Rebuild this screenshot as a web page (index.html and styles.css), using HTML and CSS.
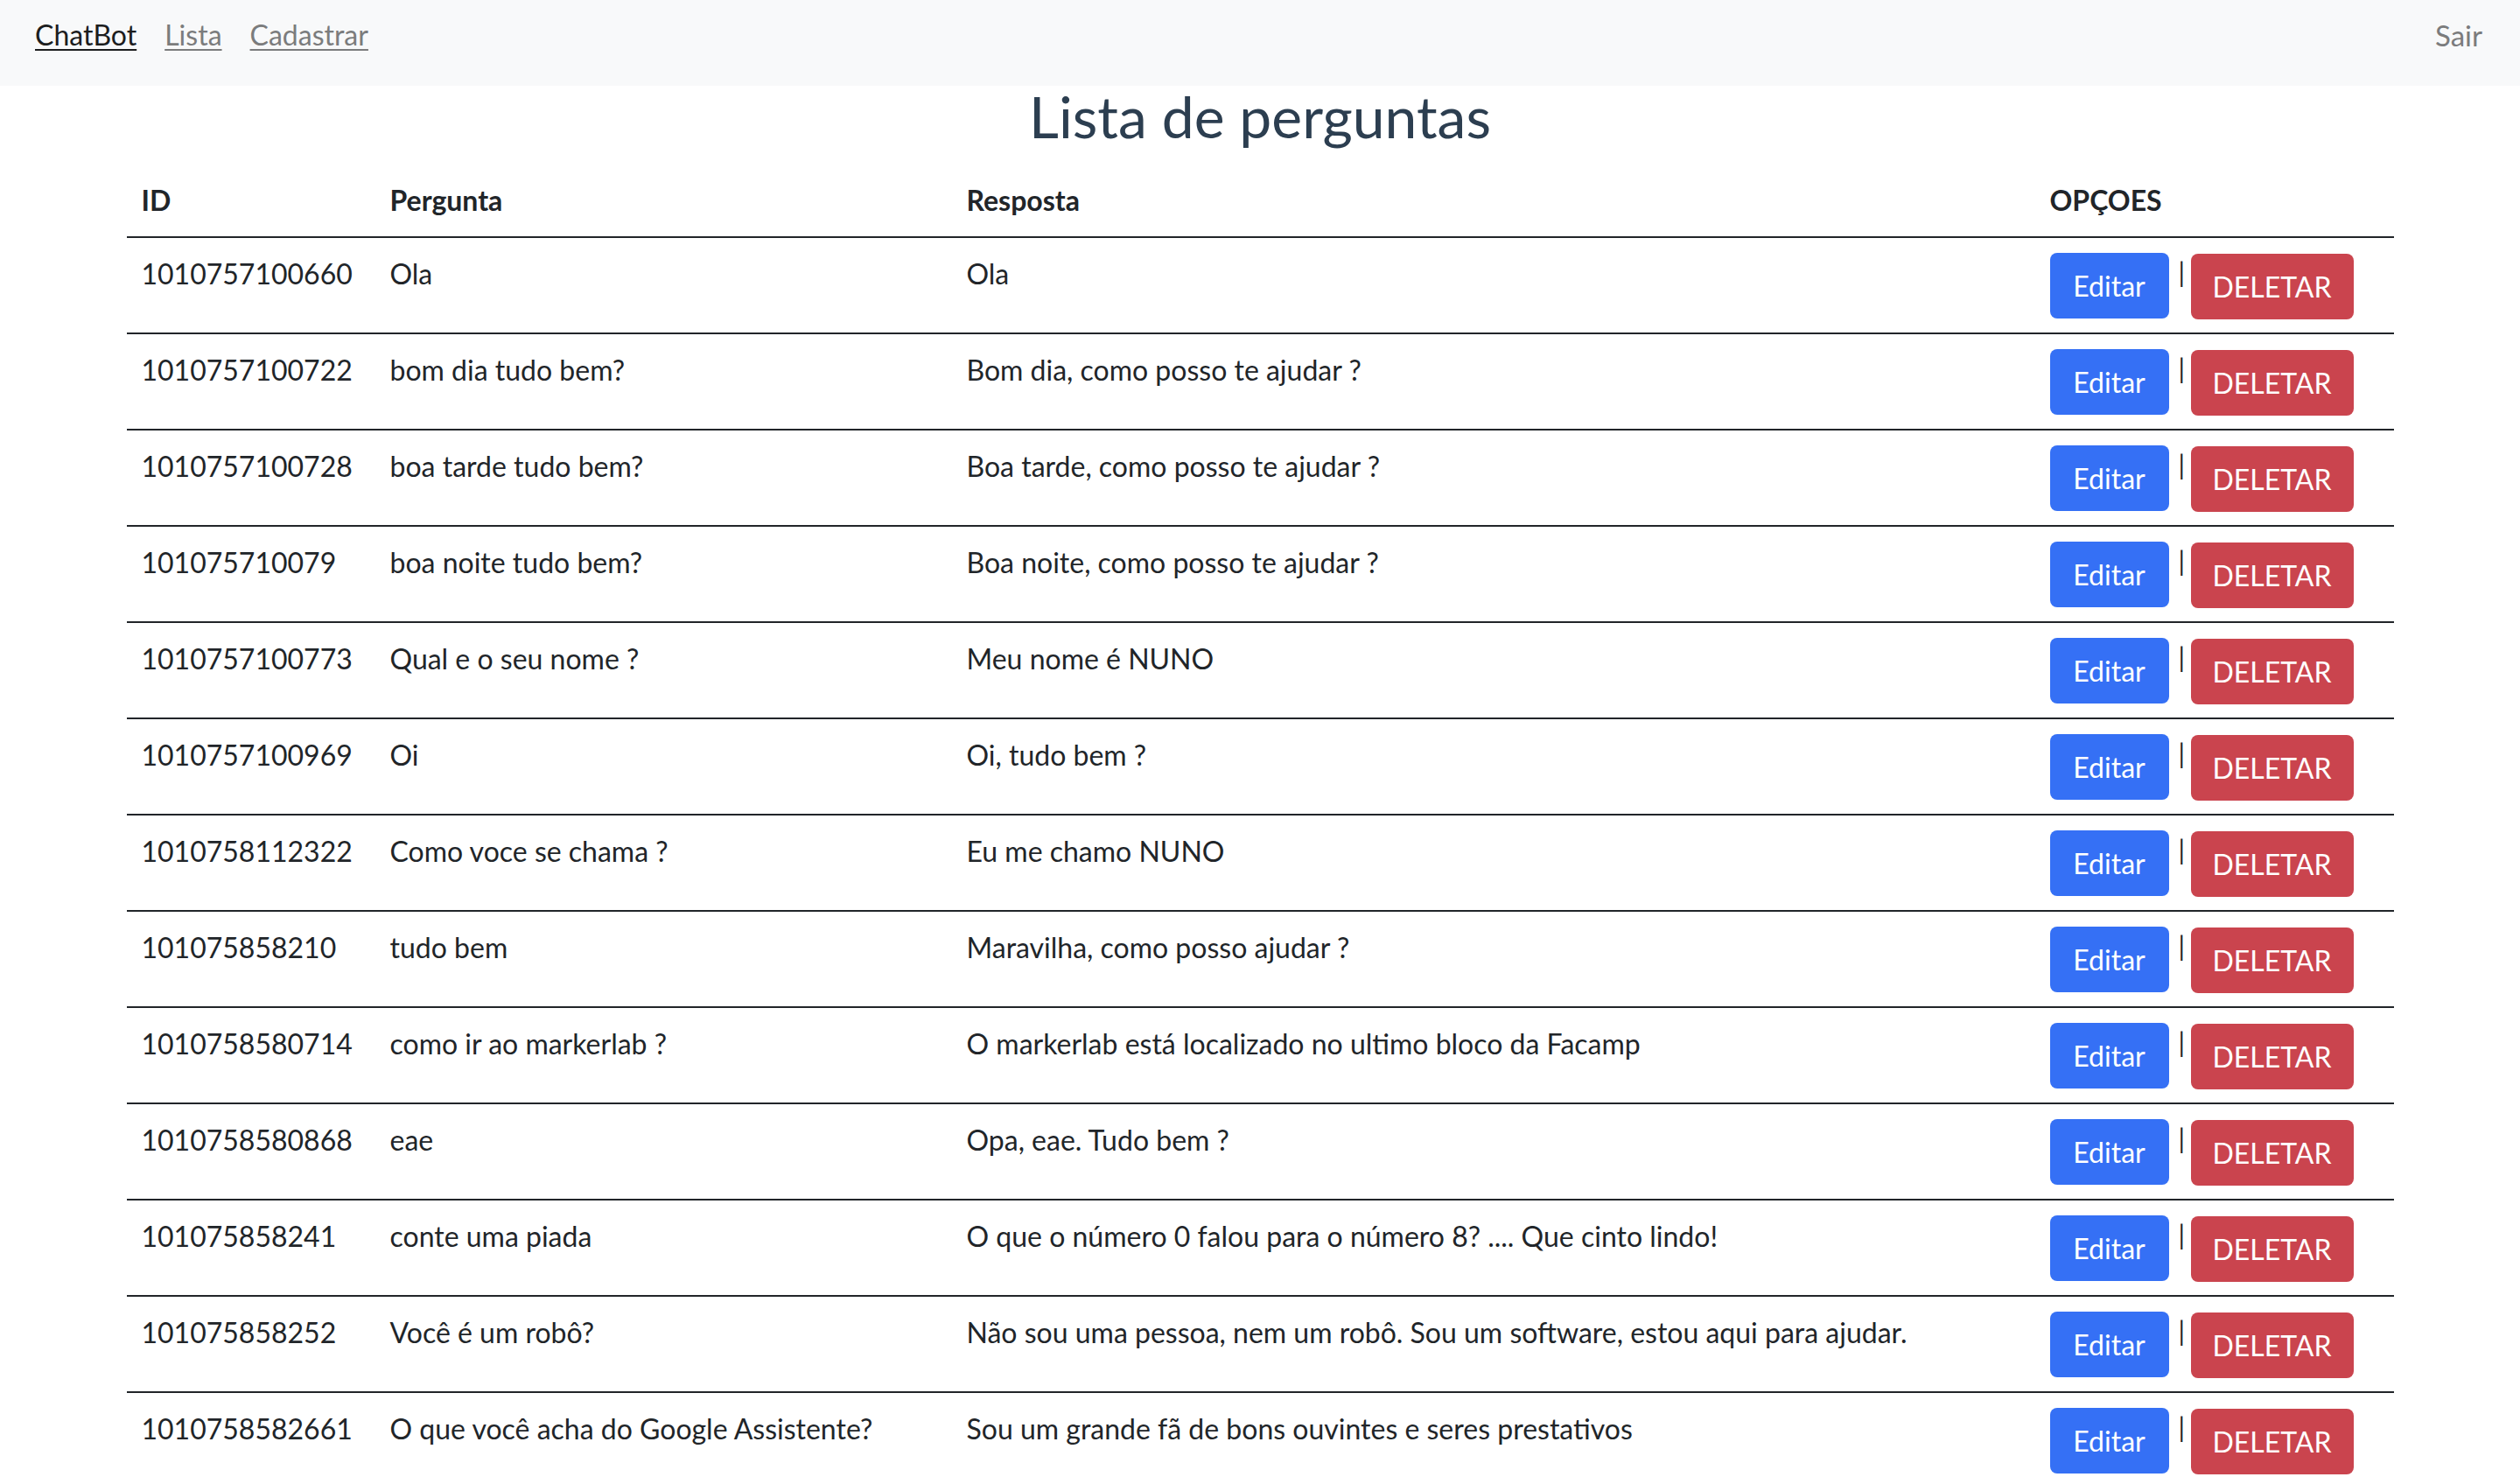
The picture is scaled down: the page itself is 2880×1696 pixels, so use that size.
FILE: index.html
```html
<!DOCTYPE html>
<html lang="pt-BR">
<head>
<meta charset="utf-8">
<title>ChatBot - Lista de perguntas</title>
<link rel="stylesheet" href="styles.css">
</head>
<body>
<nav class="navbar">
  <div class="nav-left">
    <a class="nav-link active" href="#">ChatBot</a>
    <a class="nav-link" href="#">Lista</a>
    <a class="nav-link" href="#">Cadastrar</a>
  </div>
  <a class="nav-logout" href="#">Sair</a>
</nav>
<main class="container">
  <h1 class="title">Lista de perguntas</h1>
  <table class="qtable">
    <colgroup>
      <col class="col-id"><col class="col-q"><col class="col-a"><col class="col-opt">
    </colgroup>
    <thead>
      <tr><th>ID</th><th>Pergunta</th><th>Resposta</th><th>OPÇOES</th></tr>
    </thead>
    <tbody>
      <tr><td>1010757100660</td><td>Ola</td><td>Ola</td><td><div class="opts"><button class="btn btn-edit">Editar</button><span class="sep">|</span><button class="btn btn-del">DELETAR</button></div></td></tr>
      <tr><td>1010757100722</td><td>bom dia tudo bem?</td><td>Bom dia, como posso te ajudar ?</td><td><div class="opts"><button class="btn btn-edit">Editar</button><span class="sep">|</span><button class="btn btn-del">DELETAR</button></div></td></tr>
      <tr><td>1010757100728</td><td>boa tarde tudo bem?</td><td>Boa tarde, como posso te ajudar ?</td><td><div class="opts"><button class="btn btn-edit">Editar</button><span class="sep">|</span><button class="btn btn-del">DELETAR</button></div></td></tr>
      <tr><td>101075710079</td><td>boa noite tudo bem?</td><td>Boa noite, como posso te ajudar ?</td><td><div class="opts"><button class="btn btn-edit">Editar</button><span class="sep">|</span><button class="btn btn-del">DELETAR</button></div></td></tr>
      <tr><td>1010757100773</td><td>Qual e o seu nome ?</td><td>Meu nome é NUNO</td><td><div class="opts"><button class="btn btn-edit">Editar</button><span class="sep">|</span><button class="btn btn-del">DELETAR</button></div></td></tr>
      <tr><td>1010757100969</td><td>Oi</td><td>Oi, tudo bem ?</td><td><div class="opts"><button class="btn btn-edit">Editar</button><span class="sep">|</span><button class="btn btn-del">DELETAR</button></div></td></tr>
      <tr><td>1010758112322</td><td>Como voce se chama ?</td><td>Eu me chamo NUNO</td><td><div class="opts"><button class="btn btn-edit">Editar</button><span class="sep">|</span><button class="btn btn-del">DELETAR</button></div></td></tr>
      <tr><td>101075858210</td><td>tudo bem</td><td>Maravilha, como posso ajudar ?</td><td><div class="opts"><button class="btn btn-edit">Editar</button><span class="sep">|</span><button class="btn btn-del">DELETAR</button></div></td></tr>
      <tr><td>1010758580714</td><td>como ir ao markerlab ?</td><td>O markerlab está localizado no ultimo bloco da Facamp</td><td><div class="opts"><button class="btn btn-edit">Editar</button><span class="sep">|</span><button class="btn btn-del">DELETAR</button></div></td></tr>
      <tr><td>1010758580868</td><td>eae</td><td>Opa, eae. Tudo bem ?</td><td><div class="opts"><button class="btn btn-edit">Editar</button><span class="sep">|</span><button class="btn btn-del">DELETAR</button></div></td></tr>
      <tr><td>101075858241</td><td>conte uma piada</td><td>O que o número 0 falou para o número 8? .... Que cinto lindo!</td><td><div class="opts"><button class="btn btn-edit">Editar</button><span class="sep">|</span><button class="btn btn-del">DELETAR</button></div></td></tr>
      <tr><td>101075858252</td><td>Você é um robô?</td><td>Não sou uma pessoa, nem um robô. Sou um software, estou aqui para ajudar.</td><td><div class="opts"><button class="btn btn-edit">Editar</button><span class="sep">|</span><button class="btn btn-del">DELETAR</button></div></td></tr>
      <tr><td>1010758582661</td><td>O que você acha do Google Assistente?</td><td>Sou um grande fã de bons ouvintes e seres prestativos</td><td><div class="opts"><button class="btn btn-edit">Editar</button><span class="sep">|</span><button class="btn btn-del">DELETAR</button></div></td></tr>
    </tbody>
  </table>
</main>
</body>
</html>
```

FILE: styles.css
```css
html, body {
  margin: 0;
  padding: 0;
  background: #ffffff;
}

body {
  font-family: Lato, "Open Sans", "Liberation Sans", sans-serif;
  color: #2c3e50;
}

.navbar {
  display: flex;
  align-items: flex-start;
  justify-content: space-between;
  height: 98px;
  box-sizing: border-box;
  padding: 20px 43px 0 40px;
  background: #f8f9fa;
}

.nav-left {
  display: flex;
  gap: 32px;
}

.nav-link {
  font-size: 32px;
  color: #7b7c7d;
  text-decoration: underline;
  text-underline-offset: 4px;
  text-decoration-thickness: 2px;
  line-height: 40px;
}

.nav-link.active {
  color: #1c1d1e;
}

.nav-logout {
  font-size: 33px;
  color: #7b7c7d;
  text-decoration: none;
  line-height: 40px;
}

.container {
  width: 2591px;
  margin: 0 auto;
}

.title {
  margin: 0;
  text-align: center;
  font-size: 66px;
  font-weight: 400;
  line-height: 70px;
  color: #2c3e50;
}

.qtable {
  margin-top: 20px;
  width: 100%;
  border-collapse: collapse;
  table-layout: fixed;
  color: #212529;
  font-size: 32px;
  text-align: left;
}

.col-id { width: 284px; }
.col-q { width: 659px; }
.col-a { width: 1238px; }
.col-opt { width: 410px; }

.qtable th,
.qtable td {
  padding: 17px 17px 15px;
  line-height: 48px;
  vertical-align: top;
  font-weight: 400;
}

.qtable th {
  font-weight: 700;
  padding-bottom: 17px;
  border-bottom: 2px solid #212529;
}

.qtable td {
  border-top: 2px solid #212529;
}

.qtable thead + tbody tr:first-child td {
  border-top: 0;
}

.opts {
  display: flex;
  align-items: flex-start;
}

.btn {
  font-family: inherit;
  font-size: 32px;
  line-height: 48px;
  height: 75px;
  border: 0;
  border-radius: 8px;
  color: #ffffff;
  cursor: pointer;
}

.btn-edit {
  width: 136px;
  padding: 0;
  background: #3570f5;
}

.btn-del {
  width: 186px;
  padding: 0;
  margin-top: 1px;
  background: #ca444e;
}

.sep {
  display: inline-block;
  width: 3px;
  margin: 6px 11px 0 11px;
  font-size: 30px;
  line-height: 32px;
  text-align: center;
  color: #212529;
}
```
